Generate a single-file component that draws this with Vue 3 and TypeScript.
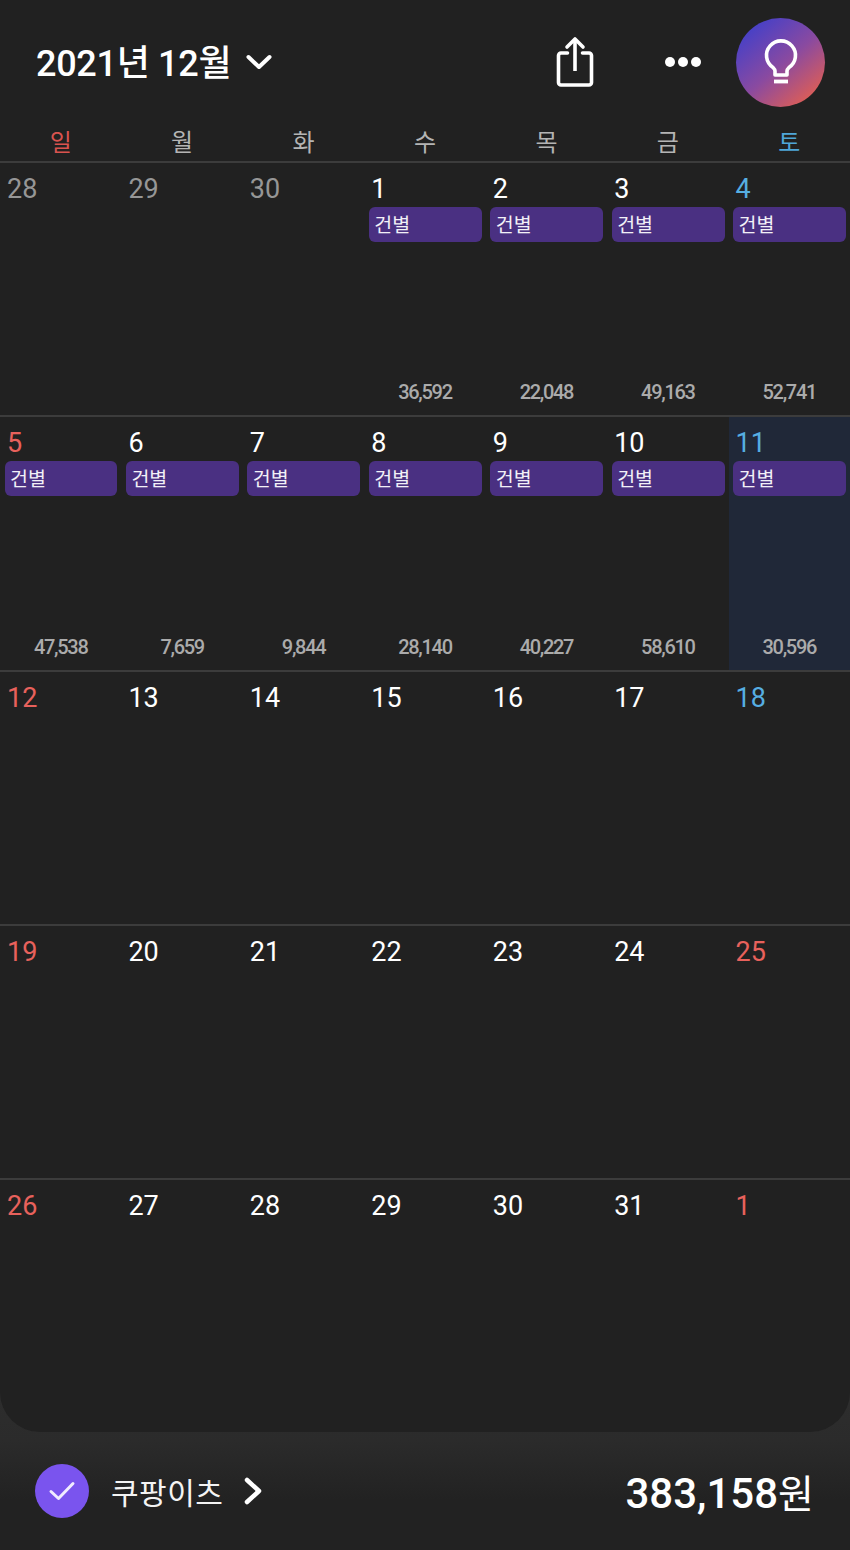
<script setup lang="ts">
interface Day {
  label: number
  tone?: 'sun' | 'sat' | 'dim'
  amount?: string
  chip?: boolean
  today?: boolean
}

const weekdays = [
  { label: '일', tone: 'sun' },
  { label: '월' },
  { label: '화' },
  { label: '수' },
  { label: '목' },
  { label: '금' },
  { label: '토', tone: 'sat' }
]

const weeks: Day[][] = [
  [
    { label: 28, tone: 'dim' },
    { label: 29, tone: 'dim' },
    { label: 30, tone: 'dim' },
    { label: 1, chip: true, amount: '36,592' },
    { label: 2, chip: true, amount: '22,048' },
    { label: 3, chip: true, amount: '49,163' },
    { label: 4, tone: 'sat', chip: true, amount: '52,741' }
  ],
  [
    { label: 5, tone: 'sun', chip: true, amount: '47,538' },
    { label: 6, chip: true, amount: '7,659' },
    { label: 7, chip: true, amount: '9,844' },
    { label: 8, chip: true, amount: '28,140' },
    { label: 9, chip: true, amount: '40,227' },
    { label: 10, chip: true, amount: '58,610' },
    { label: 11, tone: 'sat', chip: true, amount: '30,596', today: true }
  ],
  [
    { label: 12, tone: 'sun' },
    { label: 13 },
    { label: 14 },
    { label: 15 },
    { label: 16 },
    { label: 17 },
    { label: 18, tone: 'sat' }
  ],
  [
    { label: 19, tone: 'sun' },
    { label: 20 },
    { label: 21 },
    { label: 22 },
    { label: 23 },
    { label: 24 },
    { label: 25, tone: 'sun' }
  ],
  [
    { label: 26, tone: 'sun' },
    { label: 27 },
    { label: 28 },
    { label: 29 },
    { label: 30 },
    { label: 31 },
    { label: 1, tone: 'sun' }
  ]
]
</script>

<template>
  <div class="page">
    <main class="calendar">
      <header class="top">
        <div class="month">
          <span>2021년 12월</span>
          <svg class="chevron" width="28" height="20" viewBox="0 0 28 20" fill="none">
            <path d="M3.500 5L14 15 24.500 5" stroke="#fff" stroke-width="4" stroke-linecap="round" stroke-linejoin="round" />
          </svg>
        </div>
        <div class="actions">
          <svg class="share" width="40" height="56" viewBox="0 0 40 56" fill="none" stroke="#fff" stroke-width="3.6">
            <path d="M11.500 21H5a2.500 2.500 0 0 0-2.500 2.500v27a2.500 2.500 0 0 0 2.500 2.500h28a2.500 2.500 0 0 0 2.500-2.500v-27A2.500 2.500 0 0 0 33 21h-6.500" stroke-linecap="round" />
            <path d="M19 39V8" />
            <path d="M11 15l8-8 8 8" stroke-linecap="round" stroke-linejoin="round" />
          </svg>
          <div class="dots"><i></i><i></i><i></i></div>
          <div class="bulb">
            <svg width="36" height="48" viewBox="0 0 36 48" fill="none" stroke="#fff" stroke-width="3.6">
              <path d="M12 37v-4c0-1.500-.8-2.300-2-3.500a14.500 14.500 0 1 1 16 0c-1.200 1.200-2 2-2 3.500v4z" stroke-linejoin="round" />
              <path d="M11 43.500h14" stroke-width="3.800" />
            </svg>
          </div>
        </div>
      </header>

      <div class="weekdays">
        <div v-for="w in weekdays" :key="w.label" class="weekday" :class="w.tone">{{ w.label }}</div>
      </div>

      <section v-for="(week, i) in weeks" :key="i" class="week">
        <div v-for="(day, j) in week" :key="j" class="cell" :class="{ today: day.today }">
          <div class="num" :class="day.tone">{{ day.label }}</div>
          <div v-if="day.chip" class="chip">건별</div>
          <div v-if="day.amount" class="amount">{{ day.amount }}</div>
        </div>
      </section>
    </main>

    <footer class="bottom">
      <div class="check">
        <svg width="28" height="22" viewBox="0 0 28 22" fill="none">
          <path d="M3 11.500l7.500 7L25 3.500" stroke="#f1ecff" stroke-width="3" stroke-linecap="round" stroke-linejoin="round" />
        </svg>
      </div>
      <span class="name">쿠팡이츠</span>
      <svg class="next" width="20" height="30" viewBox="0 0 20 30" fill="none">
        <path d="M4 4l12 11L4 26" stroke="#fff" stroke-width="4.500" stroke-linecap="round" stroke-linejoin="round" />
      </svg>
      <span class="total">383,158<span class="won">원</span></span>
    </footer>
  </div>
</template>

<style scoped>
.page {
  width: 850px;
  height: 1550px;
  display: flex;
  flex-direction: column;
  overflow: hidden;
  background: linear-gradient(to bottom, #2d2d2d 1400px, #2b2b2b 1440px, #222222 1500px);
  font-family: Roboto, 'Noto Sans CJK KR', sans-serif;
  color: #fff;
}

.calendar {
  height: 1432px;
  background: #212121;
  border-radius: 0 0 40px 40px;
  overflow: hidden;
}

.top {
  height: 124px;
  display: flex;
  align-items: center;
  justify-content: space-between;
  padding: 0 25px 0 36px;
}

.month {
  display: flex;
  align-items: center;
  gap: 14px;
  margin-top: -4px;
  font-size: 36px;
  font-weight: 500;
  letter-spacing: -0.3px;
}

.chevron {
  margin-top: 3px;
}

.actions {
  display: flex;
  align-items: center;
}

.share {
  margin-right: 69px;
  margin-top: -4px;
}

.dots {
  display: flex;
  gap: 3px;
  margin-right: 35px;
}

.dots i {
  width: 10px;
  height: 10px;
  border-radius: 50%;
  background: #fff;
}

.bulb {
  width: 89px;
  height: 89px;
  border-radius: 50%;
  display: flex;
  align-items: center;
  justify-content: center;
  background: linear-gradient(140deg, #4540c8 12%, #8a4aa0 52%, #e6604e 92%);
}

.weekdays {
  height: 37px;
  display: grid;
  grid-template-columns: repeat(7, 1fr);
}

.weekday {
  text-align: center;
  font-size: 24px;
  line-height: 38px;
  color: #b4b4b4;
}

.weekday.sun {
  color: #d9534f;
}

.weekday.sat {
  color: #4fa6d8;
}

.week {
  height: 254.300px;
  display: grid;
  grid-template-columns: repeat(7, 1fr);
  border-top: 2px solid #3c3c3c;
  box-sizing: border-box;
}

.cell {
  display: flex;
  flex-direction: column;
  min-width: 0;
}

.cell.today {
  background: #202838;
}

.num {
  height: 44px;
  padding: 9px 0 0 7px;
  box-sizing: border-box;
  font-size: 27px;
  line-height: 34px;
  color: #fff;
}

.num.sun {
  color: #e8615c;
}

.num.sat {
  color: #56aee2;
}

.num.dim {
  color: #969696;
}

.chip {
  height: 35px;
  margin: 0 4px 0 4.500px;
  padding-left: 5.500px;
  border-radius: 6px;
  background: #4a3082;
  font-size: 19.500px;
  line-height: 37px;
  color: #f2f0f7;
}

.amount {
  margin-top: auto;
  height: 36px;
  margin-bottom: 3px;
  text-align: center;
  font-size: 20px;
  font-weight: 500;
  line-height: 32px;
  letter-spacing: -1.300px;
  color: #ababab;
}

.bottom {
  flex: 1;
  display: flex;
  align-items: center;
  padding: 0 36px 0 35px;
}

.check {
  width: 54px;
  height: 54px;
  border-radius: 50%;
  background: #7a54ee;
  display: flex;
  align-items: center;
  justify-content: center;
}

.name {
  margin-left: 22px;
  font-size: 30px;
  letter-spacing: 0.5px;
  color: #f4f4f4;
}

.next {
  margin-left: 20px;
}

.total {
  margin-left: auto;
  font-size: 42px;
  font-weight: 500;
}

.won {
  font-weight: 400;
  font-size: 39px;
}
</style>
